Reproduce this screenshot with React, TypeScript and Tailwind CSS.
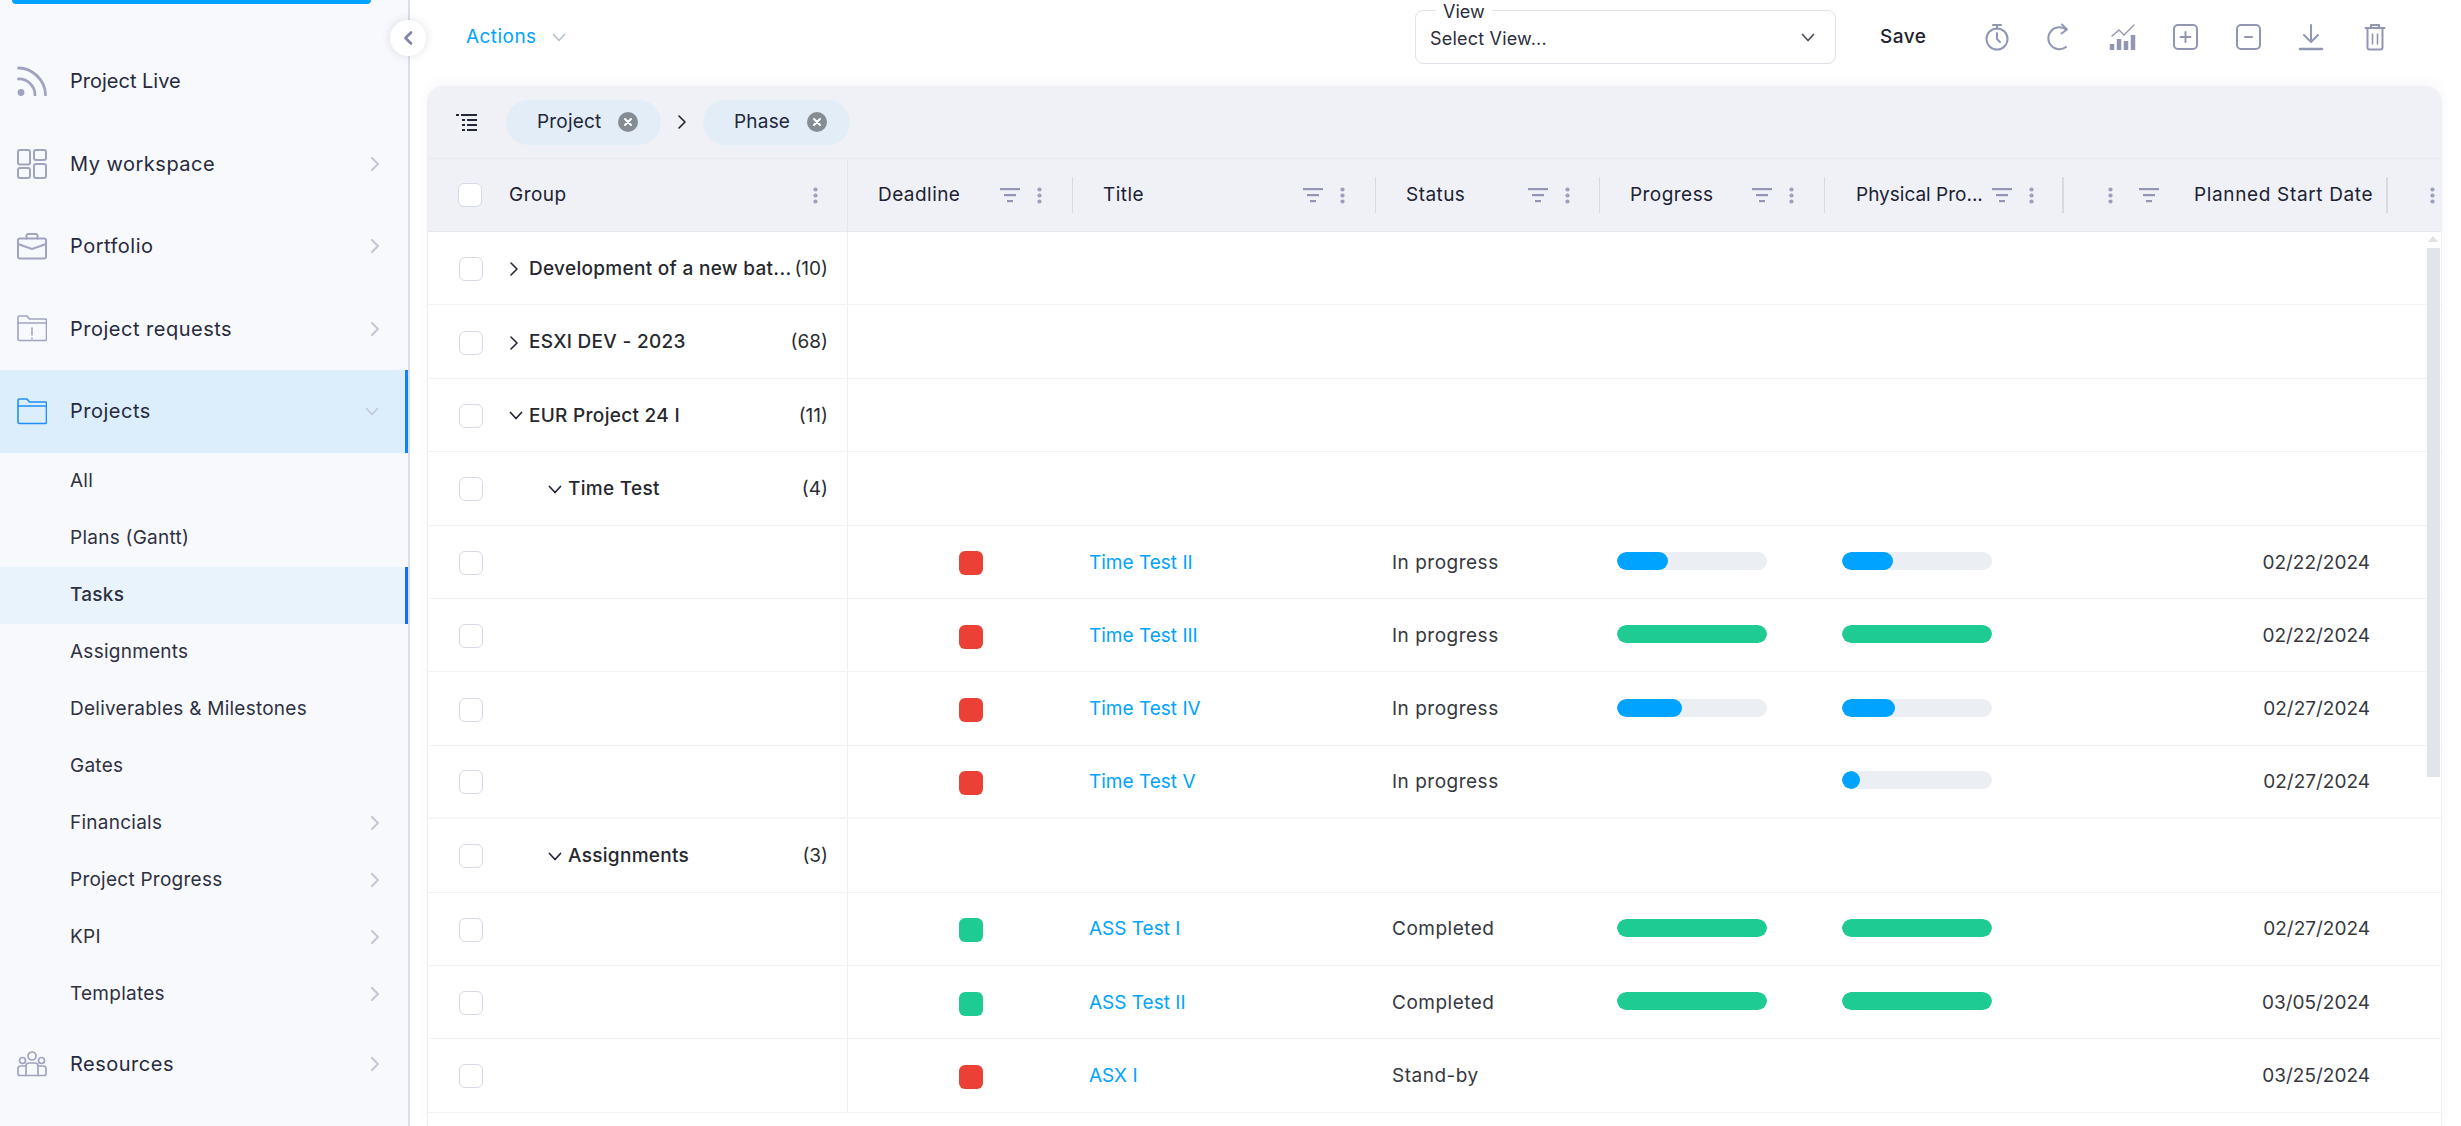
import { ReactNode } from "react";

const font = { fontFamily: "Inter, sans-serif" };
const cols = "grid grid-cols-[420px_225px_303px_224px_225px_239px_324px_1fr]";

function ChevronRight({ className = "", weight = 2.2 }: { className?: string; weight?: number }) {
  return (
    <svg className={className} width="10" height="16" viewBox="0 0 10 16" fill="none" stroke="currentColor" strokeWidth={weight} strokeLinecap="round" strokeLinejoin="round">
      <path d="M2 2l6 6-6 6" />
    </svg>
  );
}

function ChevronDown({ className = "", w = 14, h = 9 }: { className?: string; w?: number; h?: number }) {
  return (
    <svg className={className} width={w} height={h} viewBox="0 0 14 9" fill="none" stroke="currentColor" strokeWidth="1.7" strokeLinecap="round" strokeLinejoin="round">
      <path d="M1.5 1.5L7 7.5l5.5-6" />
    </svg>
  );
}

function Glyph({ children, h = 30 }: { children: ReactNode; h?: number }) {
  return (
    <svg width="30" height={h} viewBox={`0 0 30 ${h}`} fill="none" stroke="currentColor" strokeWidth="2" strokeLinecap="round" strokeLinejoin="round">
      {children}
    </svg>
  );
}

const navIcons: Record<string, ReactNode> = {
  live: (
    <Glyph>
      <path d="M1.5 2C15 2 28.5 14 28.5 29" strokeWidth="2.8" />
      <path d="M1.5 13C9 12.5 18 19 18 29" strokeWidth="2.8" />
      <circle cx="4" cy="26.5" r="3.4" fill="currentColor" stroke="none" />
    </Glyph>
  ),
  workspace: (
    <Glyph>
      <rect x="1" y="1" width="12" height="14.5" rx="2" />
      <rect x="17" y="1" width="12" height="10" rx="2" />
      <rect x="1" y="19" width="12" height="10" rx="2" />
      <rect x="17" y="15" width="12" height="14" rx="2" />
    </Glyph>
  ),
  portfolio: (
    <Glyph h={27}>
      <rect x="1" y="5.5" width="28" height="20" rx="2" />
      <path d="M9.5 5.5V3a2 2 0 012-2h7a2 2 0 012 2v2.5" />
      <path d="M1 11l14 5 14-5" />
    </Glyph>
  ),
  requests: (
    <Glyph h={27}>
      <path d="M1 24V2.5A1.5 1.5 0 012.5 1h7.5l2.5 3h16A1 1 0 0129.5 5v19a1.5 1.5 0 01-1.5 1.5H2.5A1.5 1.5 0 011 24z" strokeWidth="1.6" />
      <path d="M1 8h28.5" strokeWidth="1.6" />
      <path d="M15 13v7M15 23v.6" strokeWidth="1.6" />
    </Glyph>
  ),
  projects: (
    <Glyph h={27}>
      <path d="M1 24V2.5A1.5 1.5 0 012.5 1h7.5l2.5 3h16A1 1 0 0129.5 5v19a1.5 1.5 0 01-1.5 1.5H2.5A1.5 1.5 0 011 24z" strokeWidth="1.6" />
      <path d="M1 8h28.5" strokeWidth="1.6" />
    </Glyph>
  ),
  resources: (
    <Glyph h={26}>
      <circle cx="15" cy="5" r="4" strokeWidth="1.7" />
      <circle cx="5.500" cy="9.500" r="3" strokeWidth="1.7" />
      <circle cx="24.500" cy="9.500" r="3" strokeWidth="1.7" />
      <path d="M9 24.500V15a3 3 0 013-3h6a3 3 0 013 3v9.500" strokeWidth="1.7" />
      <path d="M9 15H3.500A2.500 2.500 0 001 17.500v5A2 2 0 003 24.500h24a2 2 0 002-2v-5a2.500 2.500 0 00-2.500-2.500H21" strokeWidth="1.7" />
    </Glyph>
  ),
};

function NavItem({ icon, label, chevron = "right", active = false, tight = false }: { icon: string; label: string; chevron?: "right" | "down" | "none"; active?: boolean; tight?: boolean }) {
  return (
    <div className={`flex h-[82.5px] items-center pl-[17px] pr-7 ${active ? "bg-[#dcedfc] border-r-[3px] border-[#0d84f5] text-[#1f8fff]" : "text-[#a0a4c1]"}`}>
      <span className="flex w-[53px] shrink-0 items-center">{navIcons[icon]}</span>
      <span className={`flex-1 text-[20px] text-[#272a3d] ${tight ? "" : "tracking-[0.5px]"}`}>{label}</span>
      {chevron === "right" && <ChevronRight className="text-[#c6c8d8]" />}
      {chevron === "down" && <ChevronDown className="-mr-0.5 text-[#c6c8d8]" />}
    </div>
  );
}

function SubItem({ label, chevron = false, active = false }: { label: string; chevron?: boolean; active?: boolean }) {
  return (
    <div className={`flex h-[57px] items-center pl-[70px] pr-7 ${active ? "bg-[#e9f3fc] border-r-[3px] border-[#0d6efd]" : ""}`}>
      <span className={`flex-1 text-[19px] tracking-[0.25px] text-[#2f3142] ${active ? "font-medium" : ""}`}>{label}</span>
      {chevron && <ChevronRight className="text-[#c6c8d8]" />}
    </div>
  );
}

function Sidebar() {
  return (
    <aside className="relative h-full w-[410px] shrink-0 border-r-2 border-[#dcdfe8] bg-[#f8f9fd]">
      <div className="ml-3 h-1 w-[359px] rounded-b-lg bg-[#00a3ff]" />
      <div className="pt-9">
        <NavItem icon="live" label="Project Live" chevron="none" tight />
        <NavItem icon="workspace" label="My workspace" />
        <NavItem icon="portfolio" label="Portfolio" />
        <NavItem icon="requests" label="Project requests" />
        <NavItem icon="projects" label="Projects" chevron="down" active />
        <div>
          <SubItem label="All" />
          <SubItem label="Plans (Gantt)" />
          <SubItem label="Tasks" active />
          <SubItem label="Assignments" />
          <SubItem label="Deliverables & Milestones" />
          <SubItem label="Gates" />
          <SubItem label="Financials" chevron />
          <SubItem label="Project Progress" chevron />
          <SubItem label="KPI" chevron />
          <SubItem label="Templates" chevron />
        </div>
        <NavItem icon="resources" label="Resources" />
      </div>
      <button className="absolute left-[390px] top-5 flex h-9 w-9 items-center justify-center rounded-full bg-white text-[#7f84a6] shadow-[0_0_10px_rgba(30,40,80,0.14)]">
        <svg width="10" height="14" viewBox="0 0 10 14" fill="none" stroke="currentColor" strokeWidth="2.6" strokeLinecap="round" strokeLinejoin="round">
          <path d="M8 1.5L2.5 7 8 12.5" />
        </svg>
      </button>
    </aside>
  );
}

function ToolIcon({ children, w = 26 }: { children: ReactNode; w?: number }) {
  return (
    <svg className="overflow-visible" width={w} height="28" viewBox={`0 0 ${w} 28`} fill="none" stroke="currentColor" strokeWidth="2" strokeLinecap="round" strokeLinejoin="round">
      {children}
    </svg>
  );
}

function TopBar() {
  return (
    <div className="flex h-[86px] shrink-0 items-center pb-[12px] pl-[39px]">
      <span className="w-[71px] text-[19px] tracking-[0.45px] text-[#00a3ff]">Actions</span>
      <ChevronDown className="ml-[15px] text-[#b9c0d0]" />
      <div className="relative ml-[849px] flex h-[54px] w-[421px] items-center justify-between rounded-lg border border-[#dfe2ea] bg-white pl-[14px] pr-[20px]">
        <span className="absolute -top-[13px] left-[20px] bg-white px-[7px] text-[18px] text-[#2a2d3a]">View</span>
        <span className="pt-[2px] text-[18px] tracking-[0.2px] text-[#2b2d3a]">Select View...</span>
        <ChevronDown className="text-[#4b4f60]" />
      </div>
      <span className="ml-[44px] w-[47px] text-[19px] font-medium tracking-[0.5px] text-[#1e2130]">Save</span>
      <div className="ml-[58px] flex items-center gap-[38px] text-[#9196b3]">
        <ToolIcon w={26}>
          <circle cx="12" cy="16" r="10.5" />
          <path d="M8 2h8M12 2v3.5M12 10v6l3 3" />
        </ToolIcon>
        <ToolIcon w={22}>
          <path d="M17 6.5A11 11 0 1017 24" />
          <path d="M13 1.500l5 5-5.500 4" />
        </ToolIcon>
        <ToolIcon w={26}>
          <path d="M3 13l7-6 5 5 10-10" strokeWidth="1.4" />
          <path d="M3 27v-6M10 27V16M17 27V18M24 27V12" strokeWidth="4.5" strokeLinecap="butt" />
        </ToolIcon>
        <ToolIcon w={25}>
          <rect x="1" y="2" width="23" height="24" rx="4" />
          <path d="M12.500 9v10M7.500 14h10" />
        </ToolIcon>
        <ToolIcon w={25}>
          <rect x="1" y="2" width="23" height="24" rx="4" />
          <path d="M9 14h7" />
        </ToolIcon>
        <ToolIcon w={24}>
          <path d="M12 2v16M5 12l7 7 7-7" />
          <path d="M1 26h22" strokeWidth="2.6" />
        </ToolIcon>
        <span className="ml-[3px] flex">
          <ToolIcon w={22}>
            <path d="M1.500 5h19M7 5V2h8v3" />
            <path d="M3.500 5v19.500A2 2 0 005.500 26.500h11a2 2 0 002-2V5" />
            <path d="M8.500 11v10M13.500 11v10" strokeWidth="1.6" />
          </ToolIcon>
        </span>
      </div>
    </div>
  );
}

function Box({ className = "" }: { className?: string }) {
  return <span className={`block h-6 w-6 shrink-0 rounded-[6px] border border-[#d6d9e8] bg-white ${className}`} />;
}

function Dots({ className = "" }: { className?: string }) {
  return (
    <svg className={`shrink-0 text-[#9a9fbc] ${className}`} width="5" height="17" viewBox="0 0 5 17" fill="currentColor">
      <circle cx="2.500" cy="2.500" r="2.100" />
      <circle cx="2.500" cy="8.500" r="2.100" />
      <circle cx="2.500" cy="14.500" r="2.100" />
    </svg>
  );
}

function FilterIcon({ className = "" }: { className?: string }) {
  return (
    <svg className={`shrink-0 text-[#9196b5] ${className}`} width="20" height="15" viewBox="0 0 20 15" fill="currentColor">
      <rect x="0" y="0" width="20" height="2.200" />
      <rect x="4" y="6" width="12" height="2.200" />
      <rect x="7" y="12" width="6" height="2.200" />
    </svg>
  );
}

function XBadge() {
  return (
    <span className="flex h-5 w-5 items-center justify-center rounded-full bg-[#868c94]">
      <svg width="10" height="10" viewBox="0 0 10 10" fill="none" stroke="white" strokeWidth="2" strokeLinecap="round">
        <path d="M2 2l6 6M8 2l-6 6" />
      </svg>
    </span>
  );
}

function Pill({ label, width }: { label: string; width: string }) {
  return (
    <span className="flex h-[45px] items-center rounded-full bg-[#e3edf7] pl-[31px] pr-[23px]">
      <span className={`text-[19px] tracking-[0.2px] text-[#22273a] ${width}`}>{label}</span>
      <XBadge />
    </span>
  );
}

function GroupBar() {
  return (
    <div className="flex h-[73px] items-center border-b border-[#e7e9f0] pl-7">
      <svg width="22" height="18" viewBox="0 0 22 18" fill="#23283a">
        <rect x="0" y="1" width="3" height="2" />
        <rect x="5" y="1" width="16" height="2" />
        <rect x="6" y="6" width="3" height="2" />
        <rect x="11" y="6" width="10" height="2" />
        <rect x="6" y="11" width="3" height="2" />
        <rect x="11" y="11" width="10" height="2" />
        <rect x="6" y="16" width="3" height="2" />
        <rect x="11" y="16" width="10" height="2" />
      </svg>
      <div className="ml-[28px] flex items-center">
        <Pill label="Project" width="w-[81px]" />
        <ChevronRight className="mx-4 text-[#1e2130]" weight={1.6} />
        <Pill label="Phase" width="w-[73px]" />
      </div>
    </div>
  );
}

const headText = "text-[19px] tracking-[0.45px] text-[#1b2233]";

function HeaderCell({ label }: { label: string }) {
  return (
    <div className="flex items-center pl-[30px]">
      <span className={`w-[122px] shrink-0 ${headText}`}>{label}</span>
      <FilterIcon />
      <Dots className="ml-[17px]" />
      <span className="ml-auto h-9 w-px bg-[#d7dae3]" />
    </div>
  );
}

function HeaderRow() {
  return (
    <div className={`${cols} h-[73px] border-b border-[#e7e9f0]`}>
      <div className="flex items-center border-r border-[#e3e5ed] pl-[30px] pr-[29px]">
        <Box />
        <span className={`ml-[27px] flex-1 ${headText}`}>Group</span>
        <Dots />
      </div>
      <HeaderCell label="Deadline" />
      <div className="flex items-center pl-[30px]">
        <span className={`flex-1 ${headText}`}>Title</span>
        <FilterIcon />
        <Dots className="ml-[17px]" />
        <span className="ml-[30px] h-9 w-px bg-[#d7dae3]" />
      </div>
      <HeaderCell label="Status" />
      <HeaderCell label="Progress" />
      <div className="flex items-center pl-[31px]">
        <span className="w-[136px] shrink-0 text-[19px] text-[#1b2233]">Physical Pro...</span>
        <FilterIcon />
        <Dots className="ml-[17px]" />
        <span className="ml-auto h-9 w-0.5 bg-[#d7dae3]" />
      </div>
      <div className="flex items-center pl-[44px]">
        <Dots />
        <FilterIcon className="ml-[26px]" />
        <span className="ml-[35px] flex-1 whitespace-nowrap text-[19px] tracking-[0.65px] text-[#1b2233]">Planned Start Date</span>
        <span className="h-9 w-0.5 bg-[#d7dae3]" />
      </div>
      <div className="flex items-center justify-end overflow-hidden">
        <Dots className="translate-x-[-6px]" />
      </div>
    </div>
  );
}

function Bar({ value, color }: { value: number; color: string }) {
  return (
    <div className="-mt-[2px] h-[18px] w-[150px] overflow-hidden rounded-full bg-[#ebeef2]">
      <div className={`h-full rounded-full ${color}`} style={{ width: `${value}%` }} />
    </div>
  );
}

type Row =
  | { kind: "group"; label: string; count: number; level: 0 | 1; open: boolean }
  | { kind: "task"; title: string; status: string; dot: "red" | "green"; progress?: number; physical?: number; date: string; end?: boolean };

const rows: Row[] = [
  { kind: "group", label: "Development of a new bat...", count: 10, level: 0, open: false },
  { kind: "group", label: "ESXI DEV - 2023", count: 68, level: 0, open: false },
  { kind: "group", label: "EUR Project 24 I", count: 11, level: 0, open: true },
  { kind: "group", label: "Time Test", count: 4, level: 1, open: true },
  { kind: "task", title: "Time Test II", status: "In progress", dot: "red", progress: 34, physical: 34, date: "02/22/2024" },
  { kind: "task", title: "Time Test III", status: "In progress", dot: "red", progress: 100, physical: 100, date: "02/22/2024" },
  { kind: "task", title: "Time Test IV", status: "In progress", dot: "red", progress: 43, physical: 35, date: "02/27/2024" },
  { kind: "task", title: "Time Test V", status: "In progress", dot: "red", physical: 12, date: "02/27/2024", end: true },
  { kind: "group", label: "Assignments", count: 3, level: 1, open: true },
  { kind: "task", title: "ASS Test I", status: "Completed", dot: "green", progress: 100, physical: 100, date: "02/27/2024" },
  { kind: "task", title: "ASS Test II", status: "Completed", dot: "green", progress: 100, physical: 100, date: "03/05/2024" },
  { kind: "task", title: "ASX I", status: "Stand-by", dot: "red", date: "03/25/2024" },
];

function barColor(v: number) {
  return v === 100 ? "bg-[#1ecb93]" : "bg-[#00a3ff]";
}

function TableRow({ row }: { row: Row }) {
  const end = row.kind === "task" && row.end;
  return (
    <div className={`${cols} h-[73.4px] ${end ? "border-b-2 border-[#f4f5f8]" : "border-b border-[#f1f2f6]"}`}>
      <div className="flex items-center border-r border-[#eceef3] pl-[31px] pr-[19px] pt-[2px]">
        <Box />
        {row.kind === "group" && (
          <>
            <span className={`flex shrink-0 items-center ${row.level === 0 ? "ml-[26px]" : "ml-[65px]"} w-5`}>
              {row.open ? <ChevronDown className="text-[#23263a]" /> : <ChevronRight className="text-[#23263a]" weight={1.6} />}
            </span>
            <span className="flex-1 whitespace-nowrap text-[19px] font-medium tracking-[0.3px] text-[#26282f]">{row.label}</span>
            <span className="whitespace-nowrap text-[19px] text-[#2a2c33]">({row.count})</span>
          </>
        )}
      </div>
      {row.kind === "task" ? (
        <>
          <div className="flex items-center pl-[111px] pt-[3px]">
            <span className={`h-6 w-6 rounded-[6px] ${row.dot === "red" ? "bg-[#ea4035]" : "bg-[#1ecb93]"}`} />
          </div>
          <div className="flex items-center pl-4 pt-[2px] text-[19px] text-[#00a3ff]">{row.title}</div>
          <div className="flex items-center pl-4 pt-[2px] text-[19px] tracking-[0.5px] text-[#35373f]">{row.status}</div>
          <div className="flex items-center pl-[17px]">{row.progress !== undefined && <Bar value={row.progress} color={barColor(row.progress)} />}</div>
          <div className="flex items-center pl-[17px]">{row.physical !== undefined && <Bar value={row.physical} color={barColor(row.physical)} />}</div>
          <div className="flex items-center justify-end pr-[18px] pt-[2px] text-[19px] text-[#35373f]">{row.date}</div>
          <div />
        </>
      ) : null}
    </div>
  );
}

export default function App() {
  return (
    <div className="flex h-[1126px] w-[2461px] overflow-hidden bg-white" style={font}>
      <Sidebar />
      <main className="flex min-w-0 flex-1 flex-col pl-[17px] pr-[19px]">
        <TopBar />
        <section className="relative flex-1 overflow-hidden rounded-t-2xl border-x border-[#edeff4] bg-white shadow-[0_-4px_14px_rgba(30,40,80,0.035)]">
          <div className="bg-[#f0f1f7]">
            <GroupBar />
            <HeaderRow />
          </div>
          <div>
            {rows.map((r, i) => (
              <TableRow key={i} row={r} />
            ))}
          </div>
          <div className="absolute right-[1px] top-[162px] h-[529px] w-[13px] bg-[#e1e5e9]" />
          <div className="absolute right-[3px] top-[150px] h-0 w-0 border-x-[5px] border-b-[6px] border-x-transparent border-b-[#dde1e6]" />
        </section>
      </main>
    </div>
  );
}
